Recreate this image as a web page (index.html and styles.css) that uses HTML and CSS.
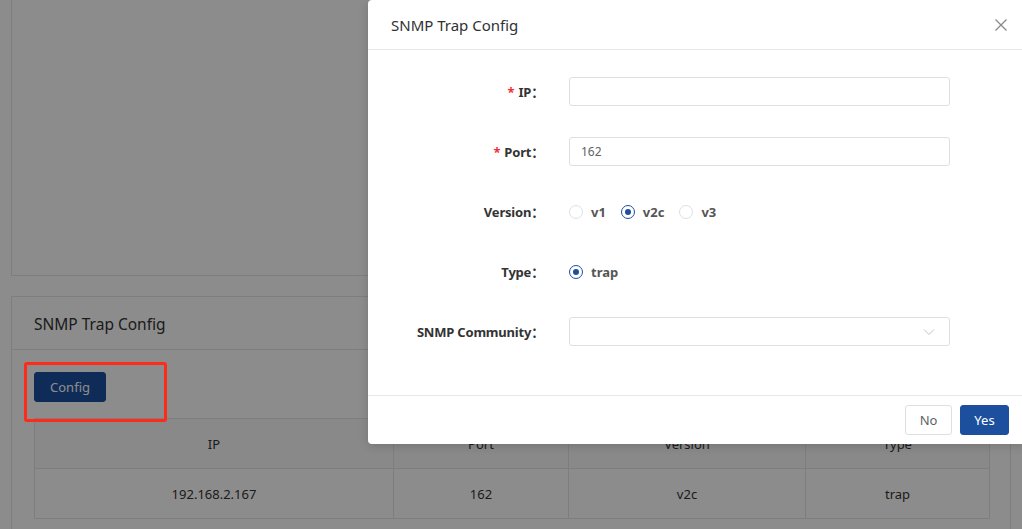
FILE: index.html
```html
<!DOCTYPE html>
<html lang="en">
<head>
<meta charset="utf-8">
<title>SNMP Trap Config</title>
<link rel="stylesheet" href="styles.css">
</head>
<body>
<div class="page">
  <div class="card card-top"></div>
  <div class="card">
    <div class="card-head">SNMP Trap Config</div>
    <div class="card-body">
      <button class="btn btn-primary btn-config">Config</button>
      <div class="table">
        <div class="row head">
          <div class="cell c1">IP</div>
          <div class="cell c2">Port</div>
          <div class="cell c3">Version</div>
          <div class="cell c4">Type</div>
        </div>
        <div class="row">
          <div class="cell c1">192.168.2.167</div>
          <div class="cell c2">162</div>
          <div class="cell c3">v2c</div>
          <div class="cell c4">trap</div>
        </div>
      </div>
    </div>
  </div>
</div>

<div class="mask"></div>
<div class="annot"></div>

<div class="dialog">
  <div class="dlg-head">
    <span class="dlg-title">SNMP Trap Config</span>
    <svg class="close" width="14" height="14" viewBox="0 0 14 14"><path d="M1.5 1.5 L12.5 12.5 M12.5 1.5 L1.5 12.5" stroke="#8a8a8a" stroke-width="1.3" fill="none"/></svg>
  </div>
  <div class="dlg-body">
    <div class="form">
      <label class="lbl"><span class="req">*</span>IP：</label>
      <div class="ctl"><div class="input"></div></div>

      <label class="lbl"><span class="req">*</span>Port：</label>
      <div class="ctl"><div class="input">162</div></div>

      <label class="lbl">Version：</label>
      <div class="ctl radios">
        <span class="radio"><span class="dot"></span>v1</span>
        <span class="radio on"><span class="dot"></span>v2c</span>
        <span class="radio"><span class="dot"></span>v3</span>
      </div>

      <label class="lbl">Type：</label>
      <div class="ctl radios">
        <span class="radio on"><span class="dot"></span>trap</span>
      </div>

      <label class="lbl">SNMP Community：</label>
      <div class="ctl"><div class="input select">
        <svg class="chev" width="12" height="8" viewBox="0 0 12 8"><path d="M1 1.5 L6 6.5 L11 1.5" stroke="#c0c4cc" stroke-width="1" fill="none"/></svg>
      </div></div>
    </div>
  </div>
  <div class="dlg-foot">
    <button class="btn btn-default btn-no">No</button>
    <button class="btn btn-primary btn-yes">Yes</button>
  </div>
</div>
</body>
</html>
```
FILE: styles.css
```css
html, body {
  margin: 0;
  padding: 0;
  width: 1022px;
  height: 529px;
  overflow: hidden;
  background: #fff;
  font-family: "Noto Sans", "Open Sans", "Noto Sans CJK SC", sans-serif;
  color: #333;
}

.page {
  padding: 0 11px;
  display: flex;
  flex-direction: column;
  gap: 20px;
}

.card {
  border: 1px solid #e6e6e6;
  background: #fff;
}

.card-top {
  border-top: 0;
  height: 275px;
}

.card-head {
  height: 52px;
  line-height: 54px;
  padding-left: 22px;
  font-size: 15.5px;
  border-bottom: 1px solid #e6e6e6;
}

.card-body {
  padding: 22px 22px 20px;
}

.btn {
  font-family: inherit;
  font-size: 13px;
  border-radius: 3px;
  height: 30px;
  padding: 0 14px;
  border: 1px solid transparent;
  cursor: pointer;
}

.btn-primary {
  background: #1d4f9f;
  border-color: #1d4f9f;
  color: #fff;
}

.btn-default {
  background: #fff;
  border-color: #dcdfe6;
  color: #606266;
}

.btn-config {
  width: 72px;
  padding: 0;
  display: block;
}

.table {
  margin-top: 16px;
  width: 954px;
  border: 1px solid #e6e6e6;
  border-bottom: 0;
  font-size: 13px;
}

.row {
  display: flex;
  height: 49px;
  border-bottom: 1px solid #e6e6e6;
}

.row.head {
  background: #fafafa;
}

.cell {
  display: flex;
  align-items: center;
  justify-content: center;
  border-right: 1px solid #e6e6e6;
}

.cell:last-child { border-right: 0; }
.c1 { width: 358px; }
.c2 { width: 174px; }
.c3 { width: 236px; }
.c4 { flex: 1; }

.mask {
  position: absolute;
  inset: 0;
  background: rgba(0, 0, 0, 0.45);
}

.annot {
  position: absolute;
  left: 24px;
  top: 362px;
  width: 137px;
  height: 54px;
  border: 3px solid #ff2a1a;
  border-radius: 3px;
}

.dialog {
  position: absolute;
  left: 368px;
  top: 0;
  width: 658px;
  height: 444px;
  background: #fff;
  border-radius: 4px;
  box-shadow: 0 2px 10px rgba(0, 0, 0, 0.15);
  display: flex;
  flex-direction: column;
}

.dlg-head {
  height: 49px;
  border-bottom: 1px solid #e8e8e8;
  display: flex;
  align-items: center;
  justify-content: space-between;
  padding: 0 18px 0 23px;
}

.dlg-title {
  font-size: 15px;
  color: #303133;
}

.dlg-body {
  flex: 1;
  padding-top: 27px;
}

.form {
  display: grid;
  grid-template-columns: 169px 381px;
  column-gap: 32px;
  row-gap: 31px;
}

.lbl {
  height: 29px;
  display: flex;
  align-items: center;
  justify-content: flex-end;
  font-size: 13px;
  font-weight: bold;
  color: #333;
  margin-right: -7px;
  letter-spacing: -0.2px;
}

.req {
  color: #f0303a;
  margin-right: 4px;
  font-size: 13px;
}

.ctl {
  height: 29px;
}

.input {
  box-sizing: border-box;
  height: 29px;
  border: 1px solid #dcdfe6;
  border-radius: 3px;
  padding: 0 11px;
  font-size: 12px;
  color: #606266;
  display: flex;
  align-items: center;
}

.select {
  justify-content: flex-end;
}

.chev { margin-right: 3px; }

.radios {
  display: flex;
  align-items: center;
  gap: 15px;
}

.radio {
  display: flex;
  align-items: center;
  gap: 8px;
  font-size: 13px;
  font-weight: bold;
  color: #555;
}

.dot {
  box-sizing: border-box;
  width: 14px;
  height: 14px;
  border: 1px solid #dcdfe6;
  border-radius: 50%;
  position: relative;
}

.radio.on .dot {
  border-color: #1d4f9f;
}

.radio.on .dot::after {
  content: "";
  position: absolute;
  left: 3px;
  top: 3px;
  width: 6px;
  height: 6px;
  border-radius: 50%;
  background: #1d4f9f;
}

.dlg-foot {
  height: 48px;
  border-top: 1px solid #e8e8e8;
  display: flex;
  align-items: center;
  justify-content: flex-end;
  gap: 8px;
  padding-right: 17px;
}

.dlg-foot .btn {
  padding: 0;
}

.btn-no { width: 47px; }
.btn-yes { width: 49px; }
```
